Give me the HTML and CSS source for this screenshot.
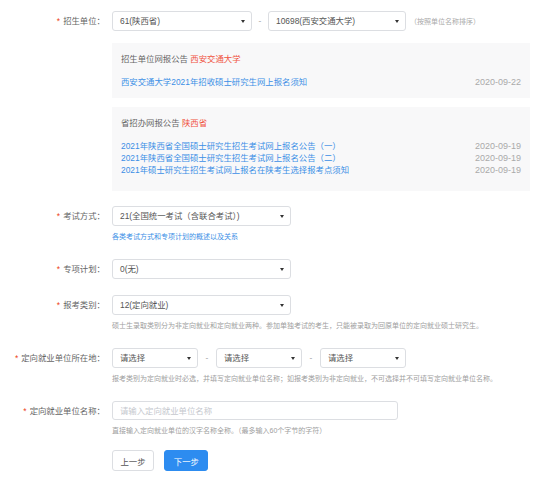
FILE: index.html
```html
<!DOCTYPE html>
<html lang="zh-CN">
<head>
    <meta charset="UTF-8">
    <meta name="viewport" content="width=device-width, initial-scale=1.0">
    <title>报名信息</title>
    <link rel="stylesheet" href="styles.css">
</head>
<body>
    <div class="form">
        <div class="item">
            <div class="item-label"><span class="star">*</span>招生单位：</div>
            <div class="item-content">
                <div class="controls">
                    <div class="select w139">61(陕西省)</div>
                    <span class="sep">-</span>
                    <div class="select w138">10698(西安交通大学)</div>
                    <span class="side-tip">（按照单位名称排序）</span>
                </div>
                <div class="notice first">
                    <div class="notice-title">招生单位网报公告 <span class="red">西安交通大学</span></div>
                    <ul class="notice-list">
                        <li><a href="#">西安交通大学2021年招收硕士研究生网上报名须知</a><span class="date">2020-09-22</span></li>
                    </ul>
                </div>
                <div class="notice">
                    <div class="notice-title">省招办网报公告 <span class="red">陕西省</span></div>
                    <ul class="notice-list">
                        <li><a href="#">2021年陕西省全国硕士研究生招生考试网上报名公告（一）</a><span class="date">2020-09-19</span></li>
                        <li><a href="#">2021年陕西省全国硕士研究生招生考试网上报名公告（二）</a><span class="date">2020-09-19</span></li>
                        <li><a href="#">2021年硕士研究生招生考试网上报名在陕考生选择报考点须知</a><span class="date">2020-09-19</span></li>
                    </ul>
                </div>
            </div>
        </div>

        <div class="item">
            <div class="item-label"><span class="star">*</span>考试方式：</div>
            <div class="item-content">
                <div class="select w178">21(全国统一考试（含联合考试）)</div>
                <a class="tip tip-link" href="#">各类考试方式和专项计划的概述以及关系</a>
            </div>
        </div>

        <div class="item">
            <div class="item-label"><span class="star">*</span>专项计划：</div>
            <div class="item-content">
                <div class="select w178">0(无)</div>
            </div>
        </div>

        <div class="item">
            <div class="item-label"><span class="star">*</span>报考类别：</div>
            <div class="item-content">
                <div class="select w178">12(定向就业)</div>
                <div class="tip">硕士生录取类别分为非定向就业和定向就业两种。参加单独考试的考生，只能被录取为回原单位的定向就业硕士研究生。</div>
            </div>
        </div>

        <div class="item">
            <div class="item-label"><span class="star">*</span>定向就业单位所在地：</div>
            <div class="item-content">
                <div class="controls">
                    <div class="select w86">请选择</div>
                    <span class="sep wide">-</span>
                    <div class="select w86">请选择</div>
                    <span class="sep wide">-</span>
                    <div class="select w86">请选择</div>
                </div>
                <div class="tip">报考类别为定向就业时必选，并填写定向就业单位名称；如报考类别为非定向就业，不可选择并不可填写定向就业单位名称。</div>
            </div>
        </div>

        <div class="item last">
            <div class="item-label"><span class="star">*</span>定向就业单位名称：</div>
            <div class="item-content">
                <input class="input" type="text" placeholder="请输入定向就业单位名称">
                <div class="tip">直接输入定向就业单位的汉字名称全称。（最多输入60个字节的字符）</div>
            </div>
        </div>

        <div class="item buttons">
            <div class="item-label"></div>
            <div class="item-content">
                <button class="btn">上一步</button>
                <button class="btn btn-primary">下一步</button>
            </div>
        </div>
    </div>
</body>
</html>
```

FILE: styles.css
```css
body { margin: 0; background: #fff; font-family: "Liberation Sans", "Noto Sans CJK SC", sans-serif; font-size: 8.4px; color: #666; }
a { color: #3b8fe6; text-decoration: none; }
ul { margin: 0; padding: 0; list-style: none; }

.form { padding-top: 11px; }
.item { display: flex; margin-bottom: 16px; }
.item.last { margin-bottom: 13px; }
.item-label { width: 112px; flex: none; box-sizing: border-box; padding-right: 7px; text-align: right; line-height: 20px; }
.star { color: #ed4014; margin-right: 3px; }
.item-content { flex: none; }
.controls { display: flex; align-items: center; }

.select { position: relative; box-sizing: border-box; height: 20px; line-height: 18px; padding-left: 7px; border: 1px solid #dcdee2; border-radius: 3px; color: #555; background: #fff; }
.select::after { content: ""; position: absolute; right: 6px; top: 8px; border-top: 3px solid #333; border-left: 2px solid transparent; border-right: 2px solid transparent; }
.w139 { width: 140px; }
.w138 { width: 138px; }
.w178 { width: 179px; }
.w86 { width: 86px; }
.sep { width: 16px; text-align: center; color: #aaa; }
.sep.wide { width: 18px; }
.side-tip { margin-left: 4px; font-size: 7px; color: #aaa; }

.notice { width: 418px; box-sizing: border-box; margin-top: 9px; margin-bottom: -1px; padding: 8px 9px 15px; background: #f8f8f9; }
.notice.first { margin-top: 12px; margin-bottom: 0; padding-bottom: 10px; }
.notice-title { line-height: 16px; margin-bottom: 9px; color: #666; }
.red { color: #f0533f; }
.notice-list li { display: flex; justify-content: space-between; line-height: 12px; }
.date { color: #aaa; font-size: 9px; }

.tip { display: block; margin-top: 4px; line-height: 13px; font-size: 7px; color: #a0a0a0; }
.tip-link { color: #3b8fe6; }

.input { display: block; box-sizing: border-box; width: 286px; height: 19px; margin: 0; padding: 0 7px; border: 1px solid #dcdee2; border-radius: 3px; font-family: inherit; font-size: 8.4px; color: #555; outline: none; }
.input::placeholder { color: #c5c8ce; }

.btn { box-sizing: border-box; width: 42px; height: 21px; margin: 0 6px 0 0; padding: 0; border: 1px solid #dcdee2; border-radius: 3px; background: #fff; font-family: inherit; font-size: 8.4px; color: #555; }
.btn-primary { width: 44px; margin-left: 2px; border-color: #2d8cf0; background: #2d8cf0; color: #fff; }
```
